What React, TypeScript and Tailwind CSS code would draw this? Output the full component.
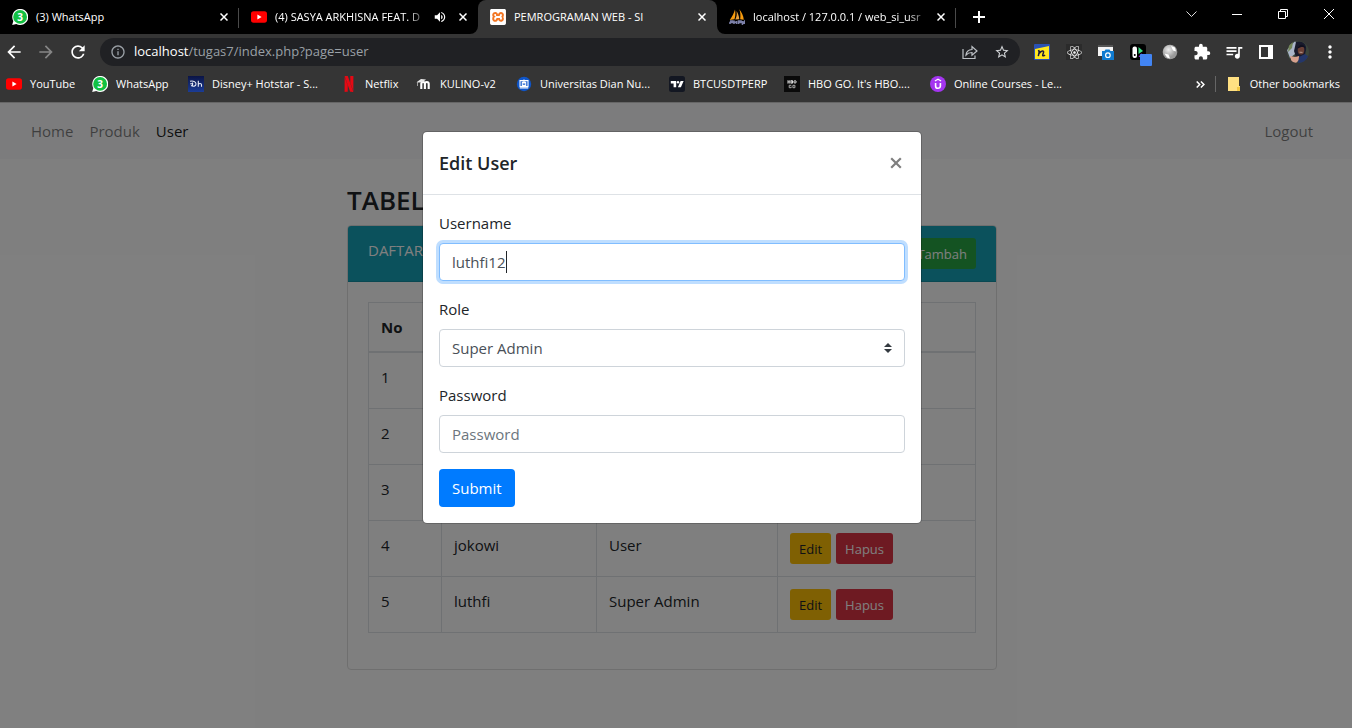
import { useState, type ReactNode } from "react";
import { FaReact } from "react-icons/fa";
import { MdExtension, MdQueueMusic, MdMoreVert, MdArrowBack, MdArrowForward, MdRefresh, MdStarBorder, MdInfoOutline, MdVolumeUp } from "react-icons/md";
import { SiNetflix, SiXampp } from "react-icons/si";

function YoutubeIcon() {
  return (
    <svg viewBox="0 0 16 16" className="size-4 shrink-0">
      <rect x="0" y="2.3" width="16" height="11.4" rx="2.6" fill="#f00" />
      <path d="M6.4 5.6v4.8L10.6 8z" fill="#fff" />
    </svg>
  );
}

function WhatsappIcon() {
  return (
    <span className="relative flex size-4 shrink-0 items-center justify-center">
      <svg viewBox="0 0 16 16" className="absolute inset-0 size-4">
        <path d="M.2 15.9l1.1-4A8 8 0 1 1 4.300 14.900z" fill="#fff" />
        <circle cx="8.1" cy="7.900" r="6.900" fill="#12c143" />
      </svg>
      <span className="relative text-[10px] leading-none font-bold text-white">3</span>
    </span>
  );
}

function HotstarIcon() {
  return (
    <svg viewBox="0 0 16 16" className="size-4 shrink-0">
      <defs>
        <linearGradient id="hotstar" x2="0" y2="1">
          <stop stopColor="#0b1445" />
          <stop offset="1" stopColor="#1b3c96" />
        </linearGradient>
      </defs>
      <rect width="16" height="16" fill="url(#hotstar)" />
      <path d="M2 5.300c3-.8 6 .2 6 2.600S5.300 10.800 3 9.600M2.200 7.800h3M4.500 6.500v4M10.300 4.800v6M10.300 8.500c.3-1.300 3.200-1.600 3.200.3v2" fill="none" stroke="#e6eaf6" strokeWidth="1.100" />
    </svg>
  );
}

function NetflixIcon() {
  return <SiNetflix className="size-4 shrink-0 text-[#e50914]" />;
}

function MoodleIcon() {
  return (
    <svg viewBox="0 0 16 16" className="size-4 shrink-0">
      <path d="M5.300 13V7.800c0-2.500 3.600-2.500 3.600 0V13M8.900 7.800c0-2.500 3.800-2.500 3.800 0V13" fill="none" stroke="#fff" strokeWidth="2.100" />
      <path d="M.5 6.300L5 3l5 .4-3.500 2.800-3.800.3z" fill="#e8e8e8" />
      <path d="M1.500 6v4" stroke="#bbb" strokeWidth=".8" />
    </svg>
  );
}

function UniversityIcon() {
  return (
    <svg viewBox="0 0 16 16" className="size-4 shrink-0">
      <circle cx="8" cy="8" r="7.200" fill="#0f55c8" />
      <path d="M4 4.600h8v6H4zM6.300 6.400h3.400v3.200H6.300zM8 3.500v5M3.800 12h8.400" fill="none" stroke="#fff" strokeWidth="1.100" />
    </svg>
  );
}

function TradingIcon() {
  return (
    <svg viewBox="0 0 16 16" className="size-4 shrink-0">
      <rect width="16" height="16" rx="2.500" fill="#131722" />
      <path d="M1.800 5h5.400v6.200H4.600V7.500H1.800z" fill="#fff" />
      <circle cx="9" cy="6.200" r="1.200" fill="#fff" />
      <path d="M11.600 5h3l-2.700 6.200h-3z" fill="#fff" />
    </svg>
  );
}

function HboIcon() {
  return (
    <svg viewBox="0 0 16 16" className="size-4 shrink-0">
      <rect width="16" height="16" fill="#0a0a0a" />
      <path d="M4 4.200v3.400M4 5.900h1.700M5.900 4.200v3.400M7.200 4.600h1.300v2.600H7.200z" fill="none" stroke="#ddd" strokeWidth="1" />
      <circle cx="11" cy="5.900" r="1.200" fill="none" stroke="#ddd" />
      <path d="M7.300 9.300H5.200v2.400h2V10.600M8.900 9.300h2v2.400h-2z" fill="none" stroke="#aaa" strokeWidth="1" />
    </svg>
  );
}

function UdemyIcon() {
  return (
    <svg viewBox="0 0 16 16" className="size-4 shrink-0">
      <circle cx="8" cy="8" r="8" fill="#a435f0" />
      <path d="M5.600 6.900v3c0 3.200 4.800 3.200 4.800 0v-3" fill="none" stroke="#fff" strokeWidth="1.600" />
      <path d="M4.900 5L8 3.200 11.100 5" fill="none" stroke="#fff" strokeWidth="1.200" />
    </svg>
  );
}

function XamppIcon() {
  return (
    <span className="flex size-4 shrink-0 items-center justify-center rounded-sm bg-[#f37623]">
      <SiXampp className="size-4 text-white" />
    </span>
  );
}

function SailIcon() {
  return (
    <svg viewBox="0 0 16 16" className="size-4 shrink-0">
      <path d="M6 .5C5 4 3 8 .8 11l4.700-.7C6.500 7 6.600 4 6 .5z" fill="#f89c0e" />
      <path d="M7.500 2c.6 3 .2 6-1.200 8.500l4-.3C10 7 9 4 7.500 2z" fill="#e9a13b" />
      <path d="M10.300.3c1.300 3.500 1.300 6.500.9 9.900l3.600.6C14.500 6.500 12.500 3 10.300.3z" fill="#f89c0e" />
      <path d="M1 12h2.500v1.500H1V15M5 11.500V15M5 13.300h2.500M7.500 12v3M9.500 15v-3H12v1.500H9.500M13.500 12v3l2-2.500V15" fill="none" stroke="#7c80a8" strokeWidth="1.600" />
    </svg>
  );
}

function CloseIcon() {
  return (
    <svg viewBox="0 0 8 8" className="size-2">
      <path d="M.5.500l7 7M7.500.500l-7 7" stroke="#fff" strokeWidth="1.500" />
    </svg>
  );
}

function Tab({ icon, title, active, muted, divider }: { icon: ReactNode; title: string; active?: boolean; muted?: boolean; divider?: boolean }) {
  return (
    <div className={active ? "relative flex h-[34px] w-[239px] shrink-0 items-center rounded-t-lg bg-[#353535] pr-[11px] pl-3" : "relative flex h-[34px] w-[239px] shrink-0 items-center pr-[11px] pl-3"}>
      {active && (
        <>
          <svg viewBox="0 0 8 8" className="absolute bottom-0 -left-2 size-2"><path d="M8 0v8H0a8 8 0 0 0 8-8z" fill="#353535" /></svg>
          <svg viewBox="0 0 8 8" className="absolute -right-2 bottom-0 size-2"><path d="M0 0v8h8a8 8 0 0 1-8-8z" fill="#353535" /></svg>
        </>
      )}
      {icon}
      <span className={active || title.length < 15 ? "ml-2 flex-1 whitespace-nowrap" : "ml-2 flex-1 [mask-image:linear-gradient(to_right,black_88%,transparent)] whitespace-nowrap"}>{title}</span>
      {muted && <MdVolumeUp className="ml-1.5 size-3.5 shrink-0 text-white" />}
      <button type="button" aria-label="Close tab" className={muted ? "ml-3 shrink-0" : "ml-2 shrink-0"}><CloseIcon /></button>
      {divider && <span className="absolute top-2 right-0 h-5 w-px bg-[#4a4a4a]" />}
    </div>
  );
}

function TabStrip() {
  return (
    <div className="flex h-[34px] bg-black text-[11px] text-white">
      <Tab icon={<WhatsappIcon />} title="(3) WhatsApp" divider />
      <Tab icon={<YoutubeIcon />} title="(4) SASYA ARKHISNA FEAT. D" muted />
      <Tab icon={<XamppIcon />} title="PEMROGRAMAN WEB - SI" active />
      <Tab icon={<SailIcon />} title="localhost / 127.0.0.1 / web_si_usr" divider />
      <button type="button" aria-label="New tab" className="flex w-[46px] items-center justify-center">
        <svg viewBox="0 0 12 12" className="size-3"><path d="M6 0v12M0 6h12" stroke="#fff" strokeWidth="2" /></svg>
      </button>
      <div className="ml-auto flex h-7">
        <button type="button" aria-label="Search tabs" className="flex w-[46px] items-center justify-center">
          <svg viewBox="0 0 11 7" className="h-[7px] w-[11px]"><path d="M.5.500l5 5 5-5" fill="none" stroke="#ddd" /></svg>
        </button>
        <button type="button" aria-label="Minimize" className="flex w-[46px] items-center justify-center">
          <span className="h-px w-2.5 bg-white" />
        </button>
        <button type="button" aria-label="Restore" className="flex w-[46px] items-center justify-center">
          <svg viewBox="0 0 10 10" className="size-2.5"><path d="M.5 2.500h7v7h-7zM2.500 2.500v-2h7v7h-2" fill="none" stroke="#fff" /></svg>
        </button>
        <button type="button" aria-label="Close window" className="flex w-[46px] items-center justify-center">
          <svg viewBox="0 0 10 10" className="size-2.5"><path d="M0 0l10 10M10 0L0 10" stroke="#fff" /></svg>
        </button>
      </div>
    </div>
  );
}

function NoteExtension() {
  return (
    <svg viewBox="0 0 16 16" className="size-4">
      <rect width="16" height="16" rx="1" fill="#2a52b5" />
      <path d="M1 5l14-3v13H1z" fill="#ffe81f" />
      <path d="M5.500 6.500L4.300 12.200M5.300 9.500c1.500-3 5-3.400 4.200-1l-.8 2.600c-.2 1.200 1.300.9 2.300-.2M4 7l1.500-.5" fill="none" stroke="#1b1b3a" strokeWidth="1.500" />
    </svg>
  );
}

function CaptureExtension() {
  return (
    <svg viewBox="0 0 16 16" className="size-4">
      <path d="M0 2h15v10H0z" fill="#f4f4f4" />
      <path d="M0 1h15v2H0z" fill="#555" />
      <path d="M4 7h2.500l1-1.500h4l1 1.500H16v9H4z" fill="#0f7bd0" />
      <circle cx="9.900" cy="11.200" r="2.300" fill="none" stroke="#fff" strokeWidth="1.200" />
    </svg>
  );
}

function BlockExtension() {
  return (
    <svg viewBox="0 0 22 22" className="mt-1.5 ml-1.5 size-[22px] shrink-0">
      <rect width="16" height="16" rx="3" fill="#000" />
      <rect x="2.500" y="2.500" width="4.500" height="11.500" rx="2" fill="#fff" />
      <circle cx="4.750" cy="11" r="1" fill="#000" />
      <path d="M8.500 3l4.500 4-4.500 3z" fill="#3ddc84" />
      <path d="M8.500 13l3-4v4z" fill="#8f22d8" />
      <rect x="10" y="10" width="12" height="12" rx="1" fill="#4285f4" />
    </svg>
  );
}

function SphereExtension() {
  return (
    <svg viewBox="0 0 16 16" className="size-4">
      <defs>
        <radialGradient id="sphere" cx=".4" cy=".35">
          <stop stopColor="#eee" />
          <stop offset="1" stopColor="#999" />
        </radialGradient>
      </defs>
      <circle cx="8" cy="8" r="7.300" fill="url(#sphere)" />
      <path d="M9 2l4 1.500 1 4-3-1zM2.500 9.500l4 1 1.500 4-3-1z" fill="#fff" />
    </svg>
  );
}

function ProfilePicture() {
  return (
    <svg viewBox="0 0 22 22" className="size-[22px]">
      <defs><clipPath id="face"><circle cx="11" cy="11" r="11" /></clipPath></defs>
      <g clipPath="url(#face)">
        <rect width="22" height="22" fill="#3b453c" />
        <path d="M0 9l8-9 3 5-3 8-5 4z" fill="#aab4c8" />
        <path d="M2 4l4-3-1 6-4 4z" fill="#738559" />
        <path d="M9 1c6-2 11 2 10 8l-2 9-7 1-3-9z" fill="#191a2c" />
        <ellipse cx="14" cy="9" rx="3.300" ry="4.600" fill="#6a3f35" />
        <path d="M10.500 8c1-6 7-5 8-1-2-1.500-5-1.500-8 1z" fill="#101020" />
        <path d="M3 15l5 1 4-1 1 3-4 4H5z" fill="#d6a08d" />
        <path d="M12 16l6-3 4 3-5 6h-6z" fill="#24366a" />
        <path d="M12.500 11.200l3 .2" stroke="#c9b5aa" strokeWidth=".8" />
      </g>
    </svg>
  );
}

function Toolbar() {
  const extensions: { label: string; icon: ReactNode }[] = [
    { label: "Notes", icon: <NoteExtension /> },
    { label: "React Developer Tools", icon: <span className="flex size-4 items-center justify-center bg-[#2b2b2b]"><FaReact className="size-[15px] text-[#eee]" /></span> },
    { label: "Capture", icon: <CaptureExtension /> },
    { label: "Blocker", icon: <BlockExtension /> },
    { label: "Sphere", icon: <SphereExtension /> },
    { label: "Extensions", icon: <MdExtension className="size-[18px] text-white" /> },
    { label: "Media", icon: <MdQueueMusic className="size-5 text-white" /> },
    { label: "Side panel", icon: <svg viewBox="0 0 14 14" className="size-3.5"><path d="M0 0h14v14H0zM2 2v10h7V2z" fill="#fff" fillRule="evenodd" /></svg> },
    { label: "Profile", icon: <ProfilePicture /> },
    { label: "Menu", icon: <MdMoreVert className="size-5 text-white" /> },
  ];
  return (
    <div className="flex h-9 items-center bg-[#353535] pr-1.5 pl-1 text-[13px] text-white">
      <div className="flex gap-3">
        <button type="button" aria-label="Back"><MdArrowBack className="size-5" /></button>
        <button type="button" aria-label="Forward"><MdArrowForward className="size-5 text-[#868686]" /></button>
        <button type="button" aria-label="Reload"><MdRefresh className="size-5" /></button>
      </div>
      <div className="mr-1.5 ml-3 flex h-7 flex-1 items-center rounded-full bg-[#202124] pr-2.5 pl-2.5">
        <MdInfoOutline className="size-4 text-[#9aa0a6]" />
        <span className="ml-2 flex-1 text-[#9aa0a6]"><span className="text-white">localhost</span>/tugas7/index.php?page=user</span>
        <button type="button" aria-label="Share" className="mr-4">
          <svg viewBox="0 0 16 16" className="size-4"><path d="M1 5v9.500h12v-3M4 11c.3-3.500 2.500-5.300 6-5.500V2.500l5 4.500-5 4.300V8.500C7.500 8.500 5.500 9.200 4 11z" fill="none" stroke="#bdc1c6" strokeWidth="1.200" /></svg>
        </button>
        <button type="button" aria-label="Bookmark this page"><MdStarBorder className="size-4 text-[#d0d3d6]" /></button>
      </div>
      <div className="flex">
        {extensions.map((e) => (
          <button key={e.label} type="button" aria-label={e.label} className="flex h-7 w-8 items-center justify-center">{e.icon}</button>
        ))}
      </div>
    </div>
  );
}

function Bookmarks() {
  const items: { label: string; icon: ReactNode }[] = [
    { label: "YouTube", icon: <YoutubeIcon /> },
    { label: "WhatsApp", icon: <WhatsappIcon /> },
    { label: "Disney+ Hotstar - S...", icon: <HotstarIcon /> },
    { label: "Netflix", icon: <NetflixIcon /> },
    { label: "KULINO-v2", icon: <MoodleIcon /> },
    { label: "Universitas Dian Nu...", icon: <UniversityIcon /> },
    { label: "BTCUSDTPERP", icon: <TradingIcon /> },
    { label: "HBO GO. It's HBO....", icon: <HboIcon /> },
    { label: "Online Courses - Le...", icon: <UdemyIcon /> },
  ];
  return (
    <div className="flex h-[33px] items-center border-b border-[#666666] bg-[#353535] pr-3 pb-1 pl-1.5 text-[11px] text-white">
      <div className="grid flex-1 grid-cols-[86px_96px_153px_75px_100px_153px_115px_146px_1fr]">
        {items.map((b) => (
          <a key={b.label} href="#" className="flex items-center gap-2 whitespace-nowrap">{b.icon}{b.label}</a>
        ))}
      </div>
      <button type="button" aria-label="More bookmarks" className="mr-2.5">
        <svg viewBox="0 0 9 7" className="h-[7px] w-[9px]"><path d="M.7.500l3 3-3 3M4.900.500l3 3-3 3" fill="none" stroke="#fff" strokeWidth="1.500" /></svg>
      </button>
      <span className="h-4 w-px bg-[#666]" />
      <a href="#" className="ml-3 flex items-center gap-2.5">
        <svg viewBox="0 0 12 14" className="h-3.5 w-3"><path d="M0 0h11v9h1v5H0z" fill="#ffe082" /><path d="M9 10h3v4H9z" fill="#f2c744" /></svg>
        Other bookmarks
      </a>
    </div>
  );
}

const users = [
  { name: "luthfi12", role: "Super Admin" },
  { name: "admin", role: "Admin" },
  { name: "budi", role: "User" },
  { name: "jokowi", role: "User" },
  { name: "luthfi", role: "Super Admin" },
];

function UserTable() {
  return (
    <table className="mb-4 w-full table-fixed border-collapse border border-[#dee2e6]">
      <thead>
        <tr className="text-left">
          <th className="w-[73px] border border-b-2 border-[#dee2e6] p-3">No</th>
          <th className="w-[155px] border border-b-2 border-[#dee2e6] p-3">Username</th>
          <th className="w-[181px] border border-b-2 border-[#dee2e6] p-3">Role</th>
          <th className="border border-b-2 border-[#dee2e6] p-3">Aksi</th>
        </tr>
      </thead>
      <tbody>
        {users.map((u, i) => (
          <tr key={u.name} className="align-top">
            <td className="border border-[#dee2e6] p-3">{i + 1}</td>
            <td className="border border-[#dee2e6] p-3">{u.name}</td>
            <td className="border border-[#dee2e6] p-3">{u.role}</td>
            <td className="border border-[#dee2e6] p-3">
              <div className="flex gap-[5px]">
                <button type="button" className="h-[31px] rounded-[3px] bg-[#ffc107] px-[9px] text-[13px]">Edit</button>
                <button type="button" className="h-[31px] rounded-[3px] bg-[#dc3545] px-[9px] text-[13px] text-white">Hapus</button>
              </div>
            </td>
          </tr>
        ))}
      </tbody>
    </table>
  );
}

function EditDialog() {
  const [username, setUsername] = useState("luthfi12");
  const [role, setRole] = useState("Super Admin");
  return (
    <div role="dialog" aria-labelledby="dialog-title" className="w-full max-w-[500px] rounded-[5px] border border-black/20 bg-white bg-clip-padding">
      <div className="flex items-center justify-between border-b border-[#dee2e6] p-4">
        <h5 id="dialog-title" className="text-[18px] leading-[30px] font-semibold">Edit User</h5>
        <button type="button" aria-label="Close" className="flex size-[18px] items-center justify-center">
          <svg viewBox="0 0 12 12" className="size-3"><path d="M1.200 1.200l9.600 9.600M10.800 1.200l-9.600 9.600" stroke="#7f7f7f" strokeWidth="2.200" /></svg>
        </button>
      </div>
      <form className="p-4" onSubmit={(e) => e.preventDefault()}>
        <label htmlFor="username" className="mb-2 block">Username</label>
        <div className="relative mb-4">
          <input
            id="username"
            value={username}
            onChange={(e) => setUsername(e.target.value)}
            className="block h-[38px] w-full rounded border border-[#80bdff] bg-white px-3 text-[#495057] caret-transparent shadow-[0_0_0_3px_#bfdeff] outline-none"
          />
          <span className="absolute top-2 left-[67px] h-[22px] w-px bg-[#212529]" />
        </div>
        <label htmlFor="role" className="mb-2 block">Role</label>
        <div className="relative mb-4">
          <select
            id="role"
            value={role}
            onChange={(e) => setRole(e.target.value)}
            className="block h-[38px] w-full appearance-none rounded border border-[#ced4da] bg-white px-3 text-[#495057] outline-none"
          >
            <option>Super Admin</option>
            <option>Admin</option>
            <option>User</option>
          </select>
          <svg viewBox="0 0 4 5" className="pointer-events-none absolute top-3.5 right-[13px] h-2.5 w-2"><path fill="#343a40" d="M2 0L0 2h4zm0 5L0 3h4z" /></svg>
        </div>
        <label htmlFor="password" className="mb-2 block">Password</label>
        <input
          id="password"
          type="password"
          placeholder="Password"
          className="mb-4 block h-[38px] w-full rounded border border-[#ced4da] bg-white px-3 text-[#495057] outline-none placeholder:text-[#6c757d]"
        />
        <button type="submit" className="h-[38px] rounded bg-[#007bff] px-[13px] text-white">Submit</button>
      </form>
    </div>
  );
}

export default function App() {
  return (
    <div className="flex min-h-screen flex-col font-['Open_Sans',sans-serif]">
      <TabStrip />
      <Toolbar />
      <Bookmarks />
      <div className="relative flex-1 bg-white text-[15px] leading-6 text-[#212529]">
        <nav className="flex h-14 items-center gap-4 bg-[#f8f9fa] pr-[39px] pl-[31px] text-black/50">
          <a href="#">Home</a>
          <a href="#">Produk</a>
          <a href="#" className="text-black/90">User</a>
          <a href="#" className="ml-auto">Logout</a>
        </nav>
        <main className="pt-6 pr-2">
          <div className="mx-auto max-w-[650px]">
            <h3 className="mb-2 text-[26px] leading-[34px] font-semibold">TABEL USER</h3>
            <section className="rounded border border-[#dfdfdf]">
              <div className="flex h-14 items-start justify-between rounded-t-[3px] border-b border-black/10 bg-[#17a2b8] px-5 py-3 text-white">
                <span>DAFTAR USER</span>
                <button type="button" className="h-[31px] rounded-[3px] bg-[#28a745] px-[9px] text-[13px]">Tambah</button>
              </div>
              <div className="p-5">
                <UserTable />
              </div>
            </section>
          </div>
        </main>
        <div className="absolute inset-0 flex items-start justify-center bg-black/50 pt-7 pr-2">
          <EditDialog />
        </div>
      </div>
    </div>
  );
}
